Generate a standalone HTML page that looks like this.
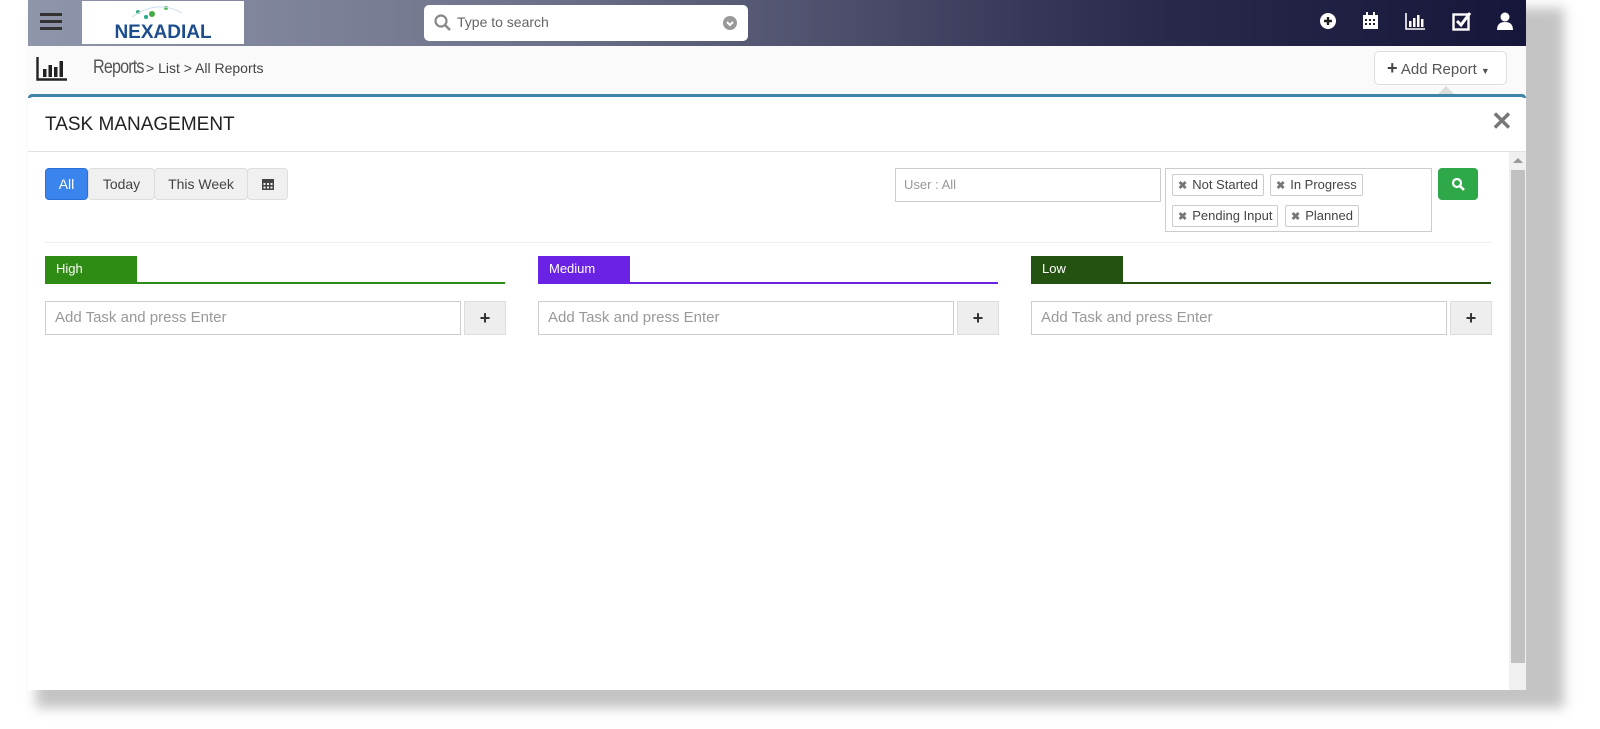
<!DOCTYPE html>
<html><head><style>
*{box-sizing:border-box;margin:0;padding:0}
body{width:1600px;height:729px;background:#fff;font-family:"Liberation Sans",sans-serif;position:relative;overflow:hidden}
.abs{position:absolute}
.shadow{left:36px;top:8px;width:1528px;height:700px;background:#c4c4c4;filter:blur(6px)}
.page{left:28px;top:0;width:1498px;height:690px;background:#fff;overflow:hidden}
.hdr{left:0;top:0;width:1498px;height:46px;background:linear-gradient(90deg,#8f96ab 0%,#6c7088 35%,#2a2a4c 75%,#16163a 100%)}
.crumb{left:0;top:46px;width:1498px;height:48px;background:#fafafa}
.ic{color:#fff;font-size:16px}
.btn{position:absolute;top:168px;height:32px;border:1px solid #ddd;background:#f0f0f0;border-radius:4px;font-size:14px;color:#444;line-height:30px;text-align:center}
.tag{position:absolute;height:22px;border:1px solid #ccc;border-radius:2px;font-size:13px;color:#444;line-height:20px;padding:0 5px;background:#fff}
.tag b{color:#777;font-size:11px;margin-right:5px}
.col{position:absolute;top:256px;width:460px}
.lbl{height:26px;width:92px;color:#fff;font-size:13px;line-height:26px;padding-left:11px}
.inp{position:absolute;top:45px;left:0;width:416px;height:34px;border:1px solid #ccc;font-size:15px;color:#999;line-height:32px;padding-left:9px}
.pl{position:absolute;top:45px;left:419px;width:42px;height:34px;border:1px solid #ddd;background:#eee;text-align:center;line-height:32px;font-weight:bold;color:#333;font-size:18px}
</style></head><body>
<div class="abs shadow"></div>
<div class="abs page">
 <div class="abs hdr"></div>
 <div class="abs" style="left:12px;top:13px;width:22px;height:3px;background:#333;box-shadow:0 7px 0 #333,0 14px 0 #333"></div>
 <div class="abs" style="left:54px;top:1px;width:162px;height:43px;background:#fff;text-align:center">
  <svg width="162" height="43"><circle cx="56" cy="11" r="2" fill="#3a7"/><circle cx="70" cy="13" r="3" fill="#4a4"/><circle cx="84" cy="7" r="2" fill="#5b5"/><circle cx="64" cy="16" r="2" fill="#2a8"/><path d="M50 16 Q75 -2 100 12" stroke="#cde" fill="none"/>
  <text x="81" y="37" text-anchor="middle" font-family="Liberation Sans" font-weight="bold" font-size="19" fill="#1d4d8c">NEXADIAL</text></svg>
 </div>
 <div class="abs" style="left:396px;top:5px;width:324px;height:36px;background:#fff;border-radius:5px">
  <svg class="abs" style="left:10px;top:9px" width="18" height="18"><circle cx="7" cy="7" r="5.5" stroke="#888" stroke-width="2.2" fill="none"/><path d="M11 11 L16 16" stroke="#888" stroke-width="2.5"/></svg>
  <span class="abs" style="left:33px;top:9px;font-size:14px;color:#666">Type to search</span>
  <svg class="abs" style="left:299px;top:11px" width="14" height="14"><circle cx="7" cy="7" r="7" fill="#999"/><path d="M4 6 L7 9 L10 6" stroke="#fff" stroke-width="2" fill="none"/></svg>
 </div>
 <svg class="abs" style="left:1292px;top:13px" width="16" height="16"><circle cx="8" cy="8" r="8" fill="#fff"/><path d="M8 4v8M4 8h8" stroke="#222" stroke-width="2.4"/></svg>
 <svg class="abs" style="left:1334px;top:12px" width="17" height="18"><rect x="1" y="3" width="15" height="14" fill="#fff"/><g fill="#222"><rect x="3" y="7" width="2" height="2"/><rect x="7" y="7" width="2" height="2"/><rect x="11" y="7" width="2" height="2"/><rect x="3" y="11" width="2" height="2"/><rect x="7" y="11" width="2" height="2"/><rect x="11" y="11" width="2" height="2"/></g><rect x="4" y="0" width="2" height="4" fill="#fff"/><rect x="11" y="0" width="2" height="4" fill="#fff"/></svg>
 <svg class="abs" style="left:1377px;top:13px" width="20" height="17"><path d="M1 0V16H20" stroke="#fff" stroke-width="1.6" fill="none"/><g fill="#fff"><rect x="4" y="8" width="2.5" height="6"/><rect x="8" y="5" width="2.5" height="9"/><rect x="12" y="2" width="2.5" height="12"/><rect x="16" y="6" width="2.5" height="8"/></g></svg>
 <svg class="abs" style="left:1424px;top:11px" width="20" height="20"><rect x="1.5" y="3.5" width="15" height="15" stroke="#fff" stroke-width="2.4" fill="none"/><path d="M5 10l4 4 9-12" stroke="#fff" stroke-width="3" fill="none"/></svg>
 <svg class="abs" style="left:1469px;top:12px" width="16" height="18"><circle cx="8" cy="5" r="4.5" fill="#fff"/><path d="M0 18 Q0 10 8 10 Q16 10 16 18Z" fill="#fff"/></svg>

 <div class="abs crumb"></div>
 <svg class="abs" style="left:8px;top:57px" width="32" height="24"><path d="M1.5 0V22.5H31" stroke="#222" stroke-width="2.4" fill="none"/><g fill="#222"><rect x="7" y="12" width="3.5" height="8"/><rect x="12.5" y="8" width="3.5" height="12"/><rect x="18" y="10" width="3.5" height="10"/><rect x="23.5" y="4" width="3.5" height="16"/></g></svg>
 <span class="abs" style="left:65px;top:57px;font-size:19px;color:#555;letter-spacing:-1px;transform:scaleX(.85);transform-origin:left">Reports</span>
 <span class="abs" style="left:118px;top:60px;font-size:14px;color:#444">&gt; List &gt; All Reports</span>
 <div class="abs" style="left:1346px;top:51px;width:133px;height:34px;border:1px solid #ddd;border-radius:5px;background:#fff;font-size:15px;color:#555;line-height:32px;padding-left:12px"><b style="font-size:18px;color:#444">+</b> Add Report <span style="font-size:9px">▼</span></div>
 <div class="abs" style="left:1410px;top:86px;width:0;height:0;border:8px solid transparent;border-bottom-color:#ddd;border-top:0"></div>
 <div class="abs" style="left:0;top:94px;width:1498px;height:4px;background:#3f83a6;border-radius:6px 6px 0 0"></div>
 <div class="abs" style="left:0;top:97px;width:1498px;height:600px;background:#fff;border-radius:5px 5px 0 0"></div>

 <span class="abs" style="left:17px;top:114px;font-size:19px;color:#222">TASK MANAGEMENT</span>
 <span class="abs" style="left:1463px;top:106px;font-size:26px;color:#777;font-weight:bold">✕</span>
 <div class="abs" style="left:0;top:151px;width:1498px;height:1px;background:#e2e2e2"></div>
 <div class="abs" style="left:1481px;top:152px;width:17px;height:538px;background:#f0f0f0"></div>
 <div class="abs" style="left:1483px;top:170px;width:14px;height:493px;background:#c1c1c1"></div>
 <div class="abs" style="left:1485px;top:158px;border:5px solid transparent;border-bottom-color:#999;border-top:0"></div>

 <div class="btn" style="left:17px;width:43px;background:#3a84ee;border-color:#2a70d8;color:#fff">All</div>
 <div class="btn" style="left:60px;width:67px">Today</div>
 <div class="btn" style="left:126px;width:94px">This Week</div>
 <div class="btn" style="left:219px;width:41px;font-size:13px">
  <svg width="14" height="14" style="margin-top:8px"><rect x="1" y="2" width="12" height="11" fill="#444"/><g fill="#f0f0f0"><rect x="2.5" y="6" width="2" height="2"/><rect x="6" y="6" width="2" height="2"/><rect x="9.5" y="6" width="2" height="2"/><rect x="2.5" y="9.5" width="2" height="2"/><rect x="6" y="9.5" width="2" height="2"/><rect x="9.5" y="9.5" width="2" height="2"/></g></svg></div>

 <div class="abs" style="left:867px;top:168px;width:266px;height:34px;border:1px solid #ccc;font-size:13px;color:#999;line-height:32px;padding-left:8px">User : All</div>
 <div class="abs" style="left:1137px;top:168px;width:267px;height:64px;border:1px solid #ccc"></div>
 <div class="tag" style="left:1144px;top:174px"><b>✖</b>Not Started</div>
 <div class="tag" style="left:1242px;top:174px"><b>✖</b>In Progress</div>
 <div class="tag" style="left:1144px;top:205px"><b>✖</b>Pending Input</div>
 <div class="tag" style="left:1257px;top:205px"><b>✖</b>Planned</div>
 <div class="abs" style="left:1410px;top:168px;width:40px;height:32px;background:#2fa84a;border-radius:4px">
  <svg class="abs" style="left:13px;top:9px" width="14" height="14"><circle cx="6" cy="6" r="4" stroke="#fff" stroke-width="2.2" fill="none"/><path d="M9 9l4 4" stroke="#fff" stroke-width="2.6"/></svg></div>
 <div class="abs" style="left:17px;top:242px;width:1447px;height:1px;background:#eee"></div>

 <div class="col" style="left:17px"><div class="lbl" style="background:#2e8b13">High</div><div style="height:2px;background:#2e8b13"></div><div class="inp">Add Task and press Enter</div><div class="pl">+</div></div>
 <div class="col" style="left:510px"><div class="lbl" style="background:#6a22e4">Medium</div><div style="height:2px;background:#6a22e4"></div><div class="inp">Add Task and press Enter</div><div class="pl">+</div></div>
 <div class="col" style="left:1003px"><div class="lbl" style="background:#245211">Low</div><div style="height:2px;background:#245211"></div><div class="inp">Add Task and press Enter</div><div class="pl">+</div></div>
</div>
</body></html>
